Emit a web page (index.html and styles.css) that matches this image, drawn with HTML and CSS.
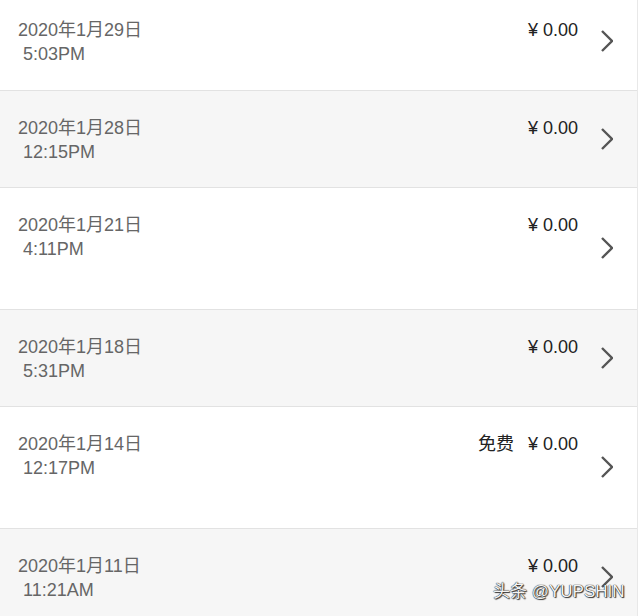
FILE: index.html
```html
<!DOCTYPE html>
<html lang="zh-CN">
<head>
<meta charset="utf-8">
<link rel="stylesheet" href="styles.css">
</head>
<body>
<div class="list">
  <div class="row white">
    <div class="info"><div class="date">2020年1月29日</div><div class="time"> 5:03PM</div></div>
    <div class="price">¥ 0.00</div>
    <svg class="chev" width="12" height="22" viewBox="0 0 12 22"><polyline points="1,1 11,11 1,21" fill="none" stroke="#555" stroke-width="2.4"/></svg>
  </div>
  <div class="row grey">
    <div class="info"><div class="date">2020年1月28日</div><div class="time"> 12:15PM</div></div>
    <div class="price">¥ 0.00</div>
    <svg class="chev" width="12" height="22" viewBox="0 0 12 22"><polyline points="1,1 11,11 1,21" fill="none" stroke="#555" stroke-width="2.4"/></svg>
  </div>
  <div class="row white tall">
    <div class="info"><div class="date">2020年1月21日</div><div class="time"> 4:11PM</div></div>
    <div class="price">¥ 0.00</div>
    <svg class="chev" width="12" height="22" viewBox="0 0 12 22"><polyline points="1,1 11,11 1,21" fill="none" stroke="#555" stroke-width="2.4"/></svg>
  </div>
  <div class="row grey">
    <div class="info"><div class="date">2020年1月18日</div><div class="time"> 5:31PM</div></div>
    <div class="price">¥ 0.00</div>
    <svg class="chev" width="12" height="22" viewBox="0 0 12 22"><polyline points="1,1 11,11 1,21" fill="none" stroke="#555" stroke-width="2.4"/></svg>
  </div>
  <div class="row white tall">
    <div class="info"><div class="date">2020年1月14日</div><div class="time"> 12:17PM</div></div>
    <div class="price"><span class="free">免费</span>¥ 0.00</div>
    <svg class="chev" width="12" height="22" viewBox="0 0 12 22"><polyline points="1,1 11,11 1,21" fill="none" stroke="#555" stroke-width="2.4"/></svg>
  </div>
  <div class="row grey">
    <div class="info"><div class="date">2020年1月11日</div><div class="time"> 11:21AM</div></div>
    <div class="price">¥ 0.00</div>
    <svg class="chev" width="12" height="22" viewBox="0 0 12 22"><polyline points="1,1 11,11 1,21" fill="none" stroke="#555" stroke-width="2.4"/></svg>
  </div>
</div>
<div class="watermark">头条 @YUPSHIN</div>
</body>
</html>
```
FILE: styles.css
```css
html, body {
  margin: 0;
  padding: 0;
  height: 616px;
  overflow: hidden;
  background: #ffffff;
  font-family: "Liberation Sans", "Noto Sans CJK SC", sans-serif;
}
.list {
  margin-top: -7px;
  width: 637px;
  border-right: 1px solid #e8e8e8;
}
.row {
  box-sizing: border-box;
  height: 97.5px;
  display: flex;
  align-items: flex-start;
  padding: 25px 24px 0 18px;
  border-bottom: 1.5px solid #e2e2e2;
}
.row.tall { height: 121.5px; }
.row.white { background: #ffffff; }
.row.grey { background: #f6f6f6; }
.info {
  flex: 1;
  font-size: 18px;
  line-height: 24px;
  color: #666666;
}
.time { white-space: pre; }
.price {
  font-size: 18px;
  line-height: 24px;
  color: #222222;
  margin-right: 23px;
}
.free { margin-right: 14px; }
.chev { align-self: center; margin-top: -25px; }
.watermark {
  position: absolute;
  left: 493px;
  top: 580px;
  font-size: 17px;
  line-height: 24px;
  color: #f4f4f4;
  text-shadow: 0 0 1px #222, 0 0 1px #222, 1px 1px 1px #333;
}
```
